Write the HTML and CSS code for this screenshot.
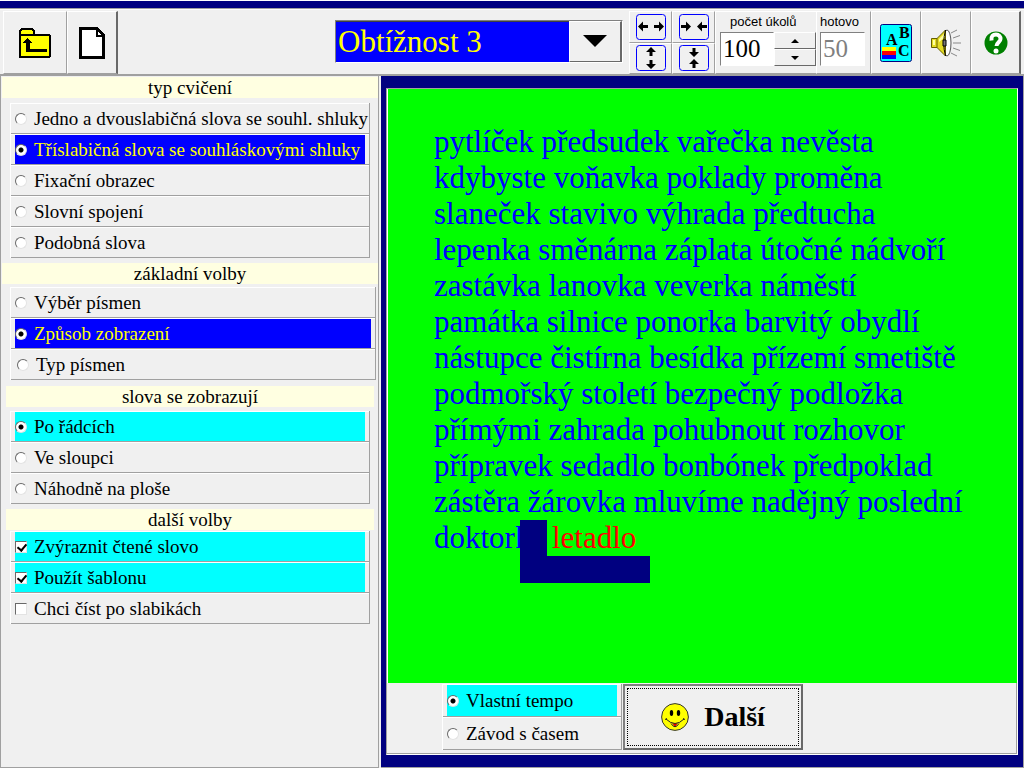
FILE: index.html
```
<!DOCTYPE html>
<html lang="cs">
<head>
<meta charset="utf-8">
<title>Obtížnost 3</title>
<link rel="stylesheet" href="styles.css">
</head>
<body>
<div class="app">
  <div class="strip"></div>
  <header class="toolbar">
    <button class="tool tool-first" type="button" aria-label="Zpět">
      <svg width="32" height="30" viewBox="0 0 32 30" shape-rendering="crispEdges"><path d="M1 29V3L3 1H13L15 3V7H30L31 8V28L30 29Z" fill="#ff0" stroke="#000" stroke-width="2"/><path d="M2 7H15" stroke="#000" stroke-width="2"/><path d="M8 10L3 15H7V24H28V21H11V15H13Z" fill="#000"/></svg>
    </button>
    <button class="tool tool-file" type="button" aria-label="Nový">
      <svg width="26" height="32" viewBox="0 0 26 32" shape-rendering="crispEdges"><path d="M1.500 1.500H18L24.500 8V30.500H1.500Z" fill="#fff" stroke="#000" stroke-width="3"/><path d="M17.500 2V8.500H24" fill="none" stroke="#000" stroke-width="2"/></svg>
    </button>
    <div class="combo">
      <select class="combo-select" aria-label="Obtížnost"><option>Obtížnost 3</option></select>
      <button class="combo-button" type="button" aria-label="Rozbalit">
        <svg width="24" height="13" viewBox="0 0 24 13"><path d="M0 0H24L12 12Z"/></svg>
      </button>
    </div>
    <div class="arrows">
      <button class="arrow" type="button" aria-label="Rozšířit"><svg width="30" height="26" viewBox="0 0 30 26"><rect class="frame" x=".5" y=".5" width="29" height="25" rx="3"/><path d="M2 12.500L7 7.500V11H12V14H7V17.500ZM28 12.500L23 7.500V11H18V14H23V17.500Z"/></svg></button>
      <button class="arrow" type="button" aria-label="Zúžit"><svg width="30" height="26" viewBox="0 0 30 26"><rect class="frame" x=".5" y=".5" width="29" height="25" rx="3"/><path d="M12 12.500L7 7.500V11H2V14H7V17.500ZM18 12.500L23 7.500V11H28V14H23V17.500Z"/></svg></button>
      <button class="arrow" type="button" aria-label="Zvýšit"><svg width="30" height="26" viewBox="0 0 30 26"><rect class="frame" x=".5" y=".5" width="29" height="25" rx="3"/><path d="M15 2L10 7H13.500V11H16.500V7H20ZM15 24L10 19H13.500V15H16.500V19H20Z"/></svg></button>
      <button class="arrow" type="button" aria-label="Snížit"><svg width="30" height="26" viewBox="0 0 30 26"><rect class="frame" x=".5" y=".5" width="29" height="25" rx="3"/><path d="M15 12L10 7H13.500V3H16.500V7H20ZM15 14L10 19H13.500V23H16.500V19H20Z"/></svg></button>
    </div>
    <div class="field field-count">
      <label class="field-label" for="count">počet úkolů</label>
      <div class="spin">
        <input class="number" id="count" type="text" value="100">
        <div class="spin-buttons">
          <button class="spin-button" type="button" aria-label="Více"><svg width="8" height="4" viewBox="0 0 8 4"><path d="M4 0L8 4H0Z"/></svg></button>
          <button class="spin-button" type="button" aria-label="Méně"><svg width="8" height="4" viewBox="0 0 8 4"><path d="M0 0H8L4 4Z"/></svg></button>
        </div>
      </div>
    </div>
    <div class="field field-done">
      <label class="field-label" for="done">hotovo</label>
      <input class="number number-done" id="done" type="text" value="50" disabled>
    </div>
    <button class="tool" type="button" aria-label="Písmo a barvy">
      <svg class="letters" width="32" height="38" viewBox="0 0 32 38"><rect x=".5" y=".5" width="31" height="37" rx="2" fill="#0ff" stroke="#000080"/><text x="6" y="21">A</text><text x="19" y="14">B</text><text x="18" y="32">C</text><path d="M2 23H16V27H2Z" fill="#ff0"/><path d="M2 27H16V31H2Z" fill="#f00"/><path d="M2 31H16V35H2Z" fill="#00f"/></svg>
    </button>
    <button class="tool" type="button" aria-label="Zvuk">
      <svg width="30" height="28" viewBox="0 0 30 28"><ellipse cx="16" cy="14" rx="4" ry="13" fill="#fff" stroke="#555"/><path d="M.5 9.500H6L14.500 1V27L6 18.500H.5Z" fill="#e4dc24" stroke="#665f00"/><path d="M6 9V19" stroke="#665f00"/><path d="M8 10L14 4V8L8 13ZM2 11H4V16H2Z" fill="#ffffa0"/><path d="M14.500 1Q11 14 14.500 27" fill="none" stroke="#000" stroke-width="1"/><path d="M12 11H15V17H12Z" fill="#777" stroke="#000"/><path d="M20 4L26 1M22 9L29 6.500M22 14H30M22 19L29 21.500M20 24L26 27" stroke="#888" fill="none"/></svg>
    </button>
    <button class="tool tool-last" type="button" aria-label="Nápověda">
      <svg width="24" height="24" viewBox="0 0 24 24"><circle cx="12" cy="12" r="11.500" fill="#008000"/><path d="M7.500 9.500C7 5 9 3.500 12 3.500S16.500 5.500 16.500 8C16.500 11 12.500 11.500 12.500 15" fill="none" stroke="#fff" stroke-width="4"/><circle cx="12" cy="20" r="2.500" fill="#fff"/></svg>
    </button>
  </header>
  <div class="content">
    <aside class="side">
      <h2 class="title title-first">typ cvičení</h2>
      <div class="group">
        <label class="option"><input class="radio" type="radio" name="type">Jedno a dvouslabičná slova se souhl. shluky</label>
        <label class="option option-blue"><input class="radio" type="radio" name="type" checked>Tříslabičná slova se souhláskovými shluky</label>
        <label class="option"><input class="radio" type="radio" name="type">Fixační obrazec</label>
        <label class="option"><input class="radio" type="radio" name="type">Slovní spojení</label>
        <label class="option"><input class="radio" type="radio" name="type">Podobná slova</label>
      </div>
      <h2 class="title">základní volby</h2>
      <div class="group group-wide">
        <label class="option"><input class="radio" type="radio" name="basic">Výběr písmen</label>
        <label class="option option-blue"><input class="radio" type="radio" name="basic" checked>Způsob zobrazení</label>
        <label class="option option-inset"><input class="radio" type="radio" name="basic">Typ písmen</label>
      </div>
      <h2 class="title title-narrow">slova se zobrazují</h2>
      <div class="group">
        <label class="option option-cyan"><input class="radio" type="radio" name="show" checked>Po řádcích</label>
        <label class="option"><input class="radio" type="radio" name="show">Ve sloupci</label>
        <label class="option"><input class="radio" type="radio" name="show">Náhodně na ploše</label>
      </div>
      <h2 class="title title-narrow title-tight">další volby</h2>
      <div class="group">
        <label class="option option-cyan"><input class="check" type="checkbox" checked>Zvýraznit čtené slovo</label>
        <label class="option option-cyan"><input class="check" type="checkbox" checked>Použít šablonu</label>
        <label class="option"><input class="check" type="checkbox">Chci číst po slabikách</label>
      </div>
    </aside>
    <main class="stage">
      <div class="panel">
        <p class="words">pytlíček předsudek vařečka nevěsta<br>kdybyste voňavka poklady proměna<br>slaneček stavivo výhrada předtucha<br>lepenka směnárna záplata útočné nádvoří<br>zastávka lanovka veverka náměstí<br>památka silnice ponorka barvitý obydlí<br>nástupce čistírna besídka přízemí smetiště<br>podmořský století bezpečný podložka<br>přímými zahrada pohubnout rozhovor<br>přípravek sedadlo bonbónek předpoklad<br>zástěra žárovka mluvíme nadějný poslední<br>doktorka <span class="current">letadlo<span class="template"></span></span></p>
        <div class="footer">
          <div class="group tempo">
            <label class="option option-cyan"><input class="radio" type="radio" name="tempo" checked>Vlastní tempo</label>
            <label class="option"><input class="radio" type="radio" name="tempo">Závod s časem</label>
          </div>
          <button class="next" type="button">
            <svg width="28" height="28" viewBox="0 0 28 28"><circle cx="14" cy="14" r="13.400" fill="#ff0" stroke="#333"/><ellipse cx="10.500" cy="10" rx="1.700" ry="3"/><ellipse cx="17.500" cy="10" rx="1.700" ry="3"/><path d="M11 20Q14 21 17 20L14 24Z" fill="#e00000"/><path d="M4 16.500L6 15.500M24 16.500L22 15.500M5 16Q14 25 23 16M10 20.500Q14 27 18 20.500" fill="none" stroke="#222"/></svg>
            <span>Další</span>
          </button>
        </div>
      </div>
    </main>
  </div>
</div>
</body>
</html>
```
FILE: styles.css
```
* {
  box-sizing: border-box;
}

body {
  margin: 0;
  background: #f0f0f0;
  color: #000;
  font-family: "Liberation Serif", serif;
  font-size: 19px;
}

button,
input,
select {
  margin: 0;
  padding: 0;
  border-radius: 0;
  font-family: inherit;
  color: #000;
}

svg {
  display: block;
}

.app {
  display: flex;
  flex-direction: column;
  min-height: 100vh;
}

.strip {
  height: 8px;
  border-top: 1px solid #fff;
  background: #000080;
}

.toolbar {
  display: flex;
  height: 68px;
  padding: 2px 3px 0;
  border-top: 1px solid #a0a0a0;
  border-bottom: 2px solid #a0a0a0;
  box-shadow: inset 0 1px #fff;
}

.tool {
  display: flex;
  align-items: center;
  justify-content: center;
  width: 50px;
  background: #f0f0f0;
  border: 1px solid;
  border-color: #fff #a0a0a0 #a0a0a0 #fff;
}

.tool-first {
  width: 64px;
}

.tool-file {
  width: 51px;
  border-right: 2px solid #696969;
}

.tool-last {
  border-right: 2px solid #696969;
}

.combo {
  display: flex;
  align-self: flex-start;
  width: 288px;
  height: 43px;
  margin: 9px 6px 0 auto;
  border: 1px solid;
  border-color: #808080 #fff #fff #808080;
}

.combo-select {
  flex: 1;
  appearance: none;
  padding: 0 0 2px 2px;
  border: 0;
  border-top: 1px solid #404040;
  background: #00f;
  color: #ff0;
  font-size: 31px;
}

.combo-button {
  display: flex;
  align-items: center;
  justify-content: center;
  width: 53px;
  background: #f0f0f0;
  border: 1px solid;
  border-color: #fff #696969 #696969 #fff;
  border-right-width: 2px;
}

.arrows {
  display: grid;
  grid-template-columns: 43px 43px;
  grid-template-rows: 1fr 1fr;
}

.arrow {
  display: flex;
  align-items: center;
  justify-content: center;
  background: #f0f0f0;
  border: 1px solid;
  border-color: #fff #a0a0a0 #a0a0a0 #fff;
}

.frame {
  fill: none;
  stroke: #00f;
}

.field {
  padding: 2px 0 0 4px;
  border: 1px solid;
  border-color: #fff #a0a0a0 #a0a0a0 #fff;
}

.field-count {
  width: 101px;
  border-right: 0;
}

.field-done {
  width: 55px;
  padding-left: 3px;
}

.field-label {
  display: block;
  height: 18px;
  font: 13px/16px "Liberation Sans", sans-serif;
}

.field-count .field-label {
  padding-left: 10px;
}

.spin {
  display: flex;
}

.number {
  width: 54px;
  height: 34px;
  padding-left: 2px;
  border: 1px solid;
  border-color: #808080 #fff #fff #808080;
  background: #fff;
  font-size: 25px;
}

.number-done {
  width: 45px;
  color: #808080;
}

.spin-buttons {
  display: grid;
  flex: 1;
}

.spin-button {
  display: flex;
  align-items: center;
  justify-content: center;
  background: #f0f0f0;
  border: 1px solid;
  border-color: #fff #696969 #696969 #fff;
}

.letters {
  overflow: visible;
}

.letters text {
  font: bold 16px "Liberation Serif", serif;
}

.content {
  display: flex;
  flex: 1;
}

.side {
  flex: none;
  width: 379px;
  padding-top: 1px;
  border-left: 1px solid #a0a0a0;
  border-right: 1px solid #a0a0a0;
  border-bottom: 1px solid #a0a0a0;
}

.title {
  height: 21px;
  margin: 5px 0 3px 1px;
  background: #ffffe1;
  font-size: 19px;
  font-weight: normal;
  line-height: 21px;
  text-align: center;
}

.title-first {
  margin-top: 0;
  margin-bottom: 5px;
}

.title-narrow {
  margin: 6px 4px 4px 5px;
}

.title-tight {
  margin-top: 5px;
  margin-bottom: 1px;
}

.group {
  margin: 0 8px 0 9px;
  border-left: 1px solid #fff;
  border-right: 1px solid #a0a0a0;
}

.group-wide {
  margin-right: 2px;
}

.option {
  display: flex;
  align-items: center;
  gap: 7px;
  height: 31px;
  padding: 0 4px;
  border-top: 1px solid #fff;
  border-bottom: 1px solid #a0a0a0;
  background-clip: content-box;
  line-height: 21px;
  white-space: nowrap;
}

.option-blue {
  background-color: #00f;
  color: #ff0;
}

.option-cyan {
  background-color: #0ff;
}

.option-inset {
  padding-left: 6px;
}

.radio,
.check {
  appearance: none;
  flex: none;
  width: 12px;
  height: 12px;
  border: 1px solid;
  border-color: #696969 #e3e3e3 #e3e3e3 #696969;
  background: #fff;
}

.radio {
  border-radius: 50%;
}

.radio:checked {
  background: radial-gradient(circle, #000 2px, #fff 3px);
}

.check:checked::before {
  content: "";
  display: block;
  width: 4px;
  height: 7px;
  margin: 0 0 0 3px;
  border: solid #000;
  border-width: 0 2px 2px 0;
  transform: rotate(40deg);
}

.stage {
  display: flex;
  flex: 1;
  min-width: 0;
  margin-left: 2px;
  padding: 12px 5px;
  border-right: 1px solid #a0a0a0;
  border-bottom: 1px solid #a0a0a0;
  background: #000080;
}

.panel {
  display: flex;
  flex-direction: column;
  flex: 1;
  min-width: 0;
  border: 1px solid;
  border-color: #a0a0a0 #fff #fff #a0a0a0;
  background: #f0f0f0;
}

.words {
  flex: 1;
  margin: 0;
  padding: 35px 40px 0 46px;
  border-left: 1px solid #fff;
  background: #0f0;
  color: #00f;
  font-size: 31px;
  line-height: 36px;
  white-space: nowrap;
}

.current {
  display: inline-block;
  position: relative;
  color: #f00;
}

.template {
  position: absolute;
  top: 0;
  left: -32px;
  width: 130px;
  height: 63px;
  border: solid #000080;
  border-width: 0 0 27px 27px;
}

.footer {
  display: flex;
  gap: 1px;
  height: 71px;
  padding: 1px 0 3px 55px;
  border-right: 1px solid #a0a0a0;
  border-bottom: 1px solid #a0a0a0;
}

.tempo {
  width: 180px;
  margin: 0;
}

.tempo .option {
  height: 33px;
}

.next {
  display: flex;
  align-items: center;
  justify-content: center;
  gap: 15px;
  width: 180px;
  border: 2px solid;
  border-color: #808080 #696969 #696969 #808080;
  outline: 1px dotted #000;
  outline-offset: -5px;
  background: #f0f0f0;
  font-size: 28px;
  font-weight: bold;
}
```
